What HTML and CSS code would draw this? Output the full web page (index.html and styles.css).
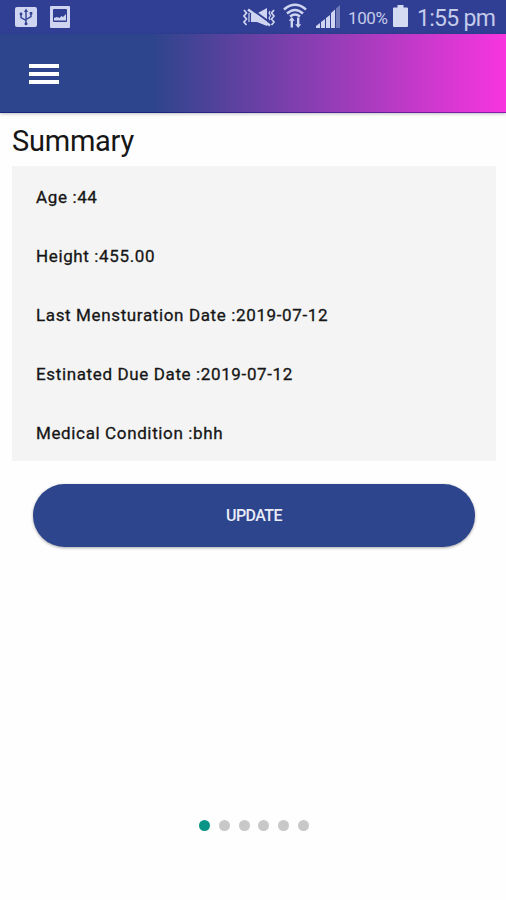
FILE: index.html
```html
<!DOCTYPE html>
<html lang="en">
<head>
    <meta charset="UTF-8">
    <meta name="viewport" content="width=device-width, initial-scale=1.0">
    <title>Summary</title>
    <link rel="stylesheet" href="styles.css">
</head>
<body>
    <div class="status-bar">
        <svg class="usb" width="22" height="20" viewBox="0 0 22 20">
            <rect width="22" height="20" rx="2" fill="#cfd5f0"/>
            <path d="M11 4v13M6 7v3.500l5 3M16 6v3.500l-5 3" fill="none" stroke="#303f94" stroke-width="1.400"/>
            <path d="M11 1.500l2 3.500H9z" fill="#303f94"/>
            <circle cx="6" cy="7" r="1.400" fill="#303f94"/>
            <rect x="14.700" y="5" width="2.600" height="2.600" fill="#303f94"/>
            <circle cx="11" cy="16.800" r="1.500" fill="#303f94"/>
        </svg>
        <svg class="picture" width="20" height="22" viewBox="0 0 20 22">
            <rect width="20" height="22" rx="1" fill="#cfd5f0"/>
            <rect x="3" y="3" width="14" height="13" rx="1" fill="#303f94"/>
            <path d="M4 14.500v-2.500l3-1 2.500 1 2-2 1.500 1 3-3v6.500z" fill="#cfd5f0"/>
        </svg>
        <svg class="mute" width="33" height="20" viewBox="0 0 33 20">
            <path d="M8 5.500h6L24 0v18l-10-4H8z" fill="#cfd5f0"/>
            <path d="M7 0l22 16" stroke="#303f94" stroke-width="2"/>
            <path d="M5 1.500l22 16" stroke="#cfd5f0" stroke-width="2.600"/>
            <path d="M1 2l2.500 3L1 8l2.500 3L1 14l2.500 3M31 2l-2.500 3L31 8l-2.500 3L31 14l-2.500 3" fill="none" stroke="#cfd5f0" stroke-width="1.700"/>
            <path d="M6 5v9M27 3l-1 2 1.500 2.500L26 10l1 2" fill="none" stroke="#cfd5f0" stroke-width="1.200"/>
        </svg>
        <svg class="wifi" width="24" height="26" viewBox="0 0 24 26">
            <path d="M1 6.500Q12-3 23 6.500M4 10.500Q12 3.500 20 10.500M7 13.500Q12 9.500 17 13.500" fill="none" stroke="#cfd5f0" stroke-width="2.400"/>
            <path d="M8.800 14l3 3.800h-1.800V24.500H7.600v-6.700H5.800zM15.200 25l-3-3.800H14V14.500h2.400v6.700h1.800z" fill="#cfd5f0"/>
        </svg>
        <svg class="signal" width="24" height="23" viewBox="0 0 24 23">
            <path d="M0 23v-2l4-3v5zM5 23v-6l4-3v9zM10 23V13l4-3v13zM15 23V8l4-3.500V23z" fill="#cfd5f0"/>
            <path d="M20 23V3.500L24 0v23z" fill="#6f7ab8"/>
        </svg>
        <span class="percent">100%</span>
        <svg class="battery" width="15" height="22" viewBox="0 0 15 22">
            <path d="M4.500 0h6v2.500H14q1 0 1 1V21q0 1-1 1H1q-1 0-1-1V3.500q0-1 1-1h3.500z" fill="#d5daf3"/>
        </svg>
        <span class="time">1:55 pm</span>
    </div>
    <header class="toolbar">
        <div class="menu">
            <span></span>
            <span></span>
            <span></span>
        </div>
    </header>
    <main class="container">
        <h1>Summary</h1>
        <div class="card">
            <p>Age :44</p>
            <p>Height :455.00</p>
            <p>Last Mensturation Date :2019-07-12</p>
            <p>Estinated Due Date :2019-07-12</p>
            <p>Medical Condition :bhh</p>
        </div>
        <button class="update">UPDATE</button>
    </main>
    <div class="dots">
        <span class="active"></span>
        <span></span>
        <span></span>
        <span></span>
        <span></span>
        <span></span>
    </div>
</body>
</html>
```
FILE: styles.css
```css
* {
    box-sizing: border-box;
}

body {
    display: flex;
    flex-direction: column;
    height: 900px;
    margin: 0;
    background-color: #fefefe;
    font-family: Roboto, sans-serif;
    color: #161616;
}

.status-bar {
    display: flex;
    align-items: flex-start;
    height: 34px;
    padding-left: 15px;
    background-color: #303f94;
    color: #c5cbea;
    white-space: nowrap;
}

.status-bar svg {
    flex: none;
}

.usb {
    margin-top: 7px;
}

.picture {
    margin: 6px 0 0 13px;
}

.mute {
    margin: 8px 0 0 173px;
}

.wifi {
    margin: 3px 0 0 7px;
}

.signal {
    margin: 5px 0 0 9px;
}

.percent {
    width: 41px;
    margin: 8px 0 0 8px;
    font-size: 17px;
    line-height: 21px;
    letter-spacing: -0.4px;
}

.battery {
    margin: 5px 0 0 4px;
}

.time {
    margin: 5px 0 0 9px;
    font-size: 23px;
    line-height: 28px;
    letter-spacing: -0.7px;
}

.toolbar {
    display: flex;
    align-items: center;
    height: 79px;
    padding: 2px 0 0 29px;
    border-bottom: 1px solid rgba(0, 0, 110, 0.45);
    background: linear-gradient(to right, #2d458c 30%, #f835df 100%);
    box-shadow: 0 1px 3px rgba(0, 0, 0, 0.25);
}

.menu {
    display: flex;
    flex-direction: column;
    gap: 4px;
    width: 30px;
}

.menu span {
    height: 4px;
    background-color: #fff;
}

.container {
    padding: 11px 10px 0 12px;
}

h1 {
    margin: 0;
    font-size: 29px;
    font-weight: 400;
    line-height: 35px;
    letter-spacing: -0.25px;
}

.card {
    height: 295px;
    margin-top: 7px;
    padding: 2px 0 0 24px;
    background-color: #f4f4f4;
}

.card p {
    margin: 0;
    font-size: 17px;
    line-height: 59px;
    letter-spacing: 0.63px;
    height: 59px;
    -webkit-text-stroke: 0.3px #161616;
}

.update {
    display: block;
    width: 442px;
    height: 63px;
    margin: 23px 0 0 21px;
    border: none;
    border-radius: 32px;
    background-color: #2d458c;
    box-shadow: 0 1px 3px rgba(0, 0, 0, 0.35);
    color: #e9ecf8;
    font-family: Roboto, sans-serif;
    font-size: 16px;
    font-weight: 500;
    letter-spacing: -0.6px;
}

.dots {
    display: flex;
    gap: 8.8px;
    margin: auto 0 69px 199px;
}

.dots span {
    width: 11px;
    height: 11px;
    border-radius: 50%;
    background-color: #c8c8c8;
}

.dots .active {
    background-color: #099485;
}
```
